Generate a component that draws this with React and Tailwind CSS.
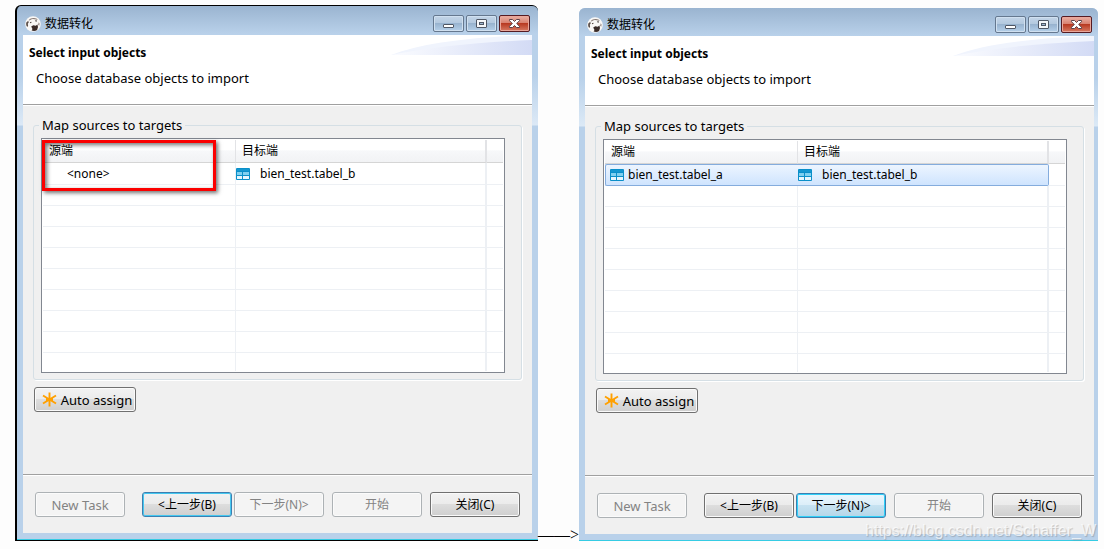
import React from "react";

function AppIcon() {
  return (
    <svg width="16" height="16" viewBox="0 0 16 16" className="shrink-0" aria-hidden="true">
      <circle cx="8" cy="8" r="7.8" fill="#f9f7f5" />
      <path d="M3.600 4.200C5 2.500 7 1.800 9 2c1 .2 1.500.5 2.300.6l1.500.9-.8.3c-1-.6-2-.7-3-.5-1.200-.4-2.300-.2-3.300.4-.7.300-1.100.6-1.600.9z" fill="#8a7d78" />
      <path d="M1.300 6.400l1.700-1.300.9.900-1.100 1.800.3 1.900-.8 1.400C1.200 9.700.9 8 1.300 6.400z" fill="#5a4d48" />
      <path d="M4.900 6.300l1.400-.5.2.9-1.300.5z" fill="#4a3c38" />
      <path d="M10 4.400l1.600-.2.3 1.200-1.300.2z" fill="#2e2421" />
      <path d="M6.200 10.600l2.100-1.400 2.500.6 1.600-1.300.6 2.600-.9 3C10.400 15.300 8.400 15.300 6.600 14.600l.9-1.700z" fill="#3a2b28" />
      <path d="M13.800 6.200l.7 1.500-.4 2.200-.7-1.600z" fill="#7b6d68" />
    </svg>
  );
}

function TableIcon() {
  return (
    <svg width="14" height="12" viewBox="0 0 14 12" className="shrink-0" aria-hidden="true">
      <rect x="0" y="0" width="14" height="12" rx="1" fill="#0a8fc9" />
      <rect x="1" y="1" width="12" height="2" fill="#1397d0" />
      <rect x="1" y="4" width="5" height="3" fill="#7fd0f0" />
      <rect x="7" y="4" width="6" height="3" fill="#7fd0f0" />
      <rect x="1" y="8" width="5" height="3" fill="#e6f6fd" />
      <rect x="7" y="8" width="6" height="3" fill="#e6f6fd" />
    </svg>
  );
}

function StarIcon() {
  return (
    <svg width="15" height="15" viewBox="0 0 15 15" className="shrink-0" aria-hidden="true">
      <path d="M7.500 .5v14M1 3.500l13 8M14 3.500l-13 8M4 7.500h7" stroke="#ffa000" strokeWidth="1.900" fill="none" />
    </svg>
  );
}

function CaptionButton({ kind }) {
  const close = kind === "close";
  const look = close
    ? "border-[#551b22] bg-[linear-gradient(#eab0a4_0%,#d98271_45%,#b83a22_50%,#d77a63_100%)] shadow-[inset_0_0_0_1px_#e9a79b]"
    : "border-[#65788f] bg-[linear-gradient(#c3d5e8_0%,#b4c9df_45%,#98b3cf_50%,#b5d0ea_100%)] shadow-[inset_0_0_0_1px_#d0e0f0]";
  const label = { min: "Minimize", max: "Maximize", close: "Close" }[kind];
  return (
    <button type="button" aria-label={label} className={"flex h-[17px] w-[31px] items-center justify-center rounded-xs border " + look}>
      <svg width="13" height="11" viewBox="0 0 13 11" aria-hidden="true">
        {kind === "min" && <rect x="1.500" y="6.500" width="10" height="3" rx=".5" fill="#fff" stroke="#4f5765" />}
        {kind === "max" && (
          <g stroke="#4f5765">
            <rect x="1.500" y="1.500" width="10" height="8" rx=".5" fill="#f5f7fa" />
            <rect x="4.500" y="4.500" width="4" height="2" fill="#9fb8d2" />
          </g>
        )}
        {close && (
          <path d="M1.500 1.500h3l2 2 2-2h3v1.200L8.700 5.500l2.800 2.800v1.200h-3l-2-2-2 2h-3V8.300l2.800-2.800-2.800-2.800z" fill="#fff" stroke="#5b4148" />
        )}
      </svg>
    </button>
  );
}

function PushButton({ children, state = "normal", className = "" }) {
  const looks = {
    normal: "border-[#707070] text-black bg-[linear-gradient(#f2f2f2_0%,#ebebeb_49%,#dddddd_50%,#cfcfcf_100%)] shadow-[inset_0_0_0_1px_#fafafa]",
    focus: "border-[#3c7fb1] text-black bg-[linear-gradient(#f2f2f2_0%,#ebebeb_49%,#dddddd_50%,#cfcfcf_100%)] shadow-[inset_0_0_0_1px_#45c8f0]",
    hot: "border-[#3c7fb1] text-black bg-[linear-gradient(#eaf6fd_0%,#dceef8_49%,#c6e2f1_50%,#b4d6e8_100%)] shadow-[inset_0_0_0_1px_#30d0f8]",
    disabled: "border-[#adb2b5] text-[#838383] bg-[#f4f4f4] shadow-[inset_0_0_0_1px_#fbfbfb]",
  };
  return (
    <button type="button" disabled={state === "disabled"} className={"flex h-[25px] items-center justify-center rounded-[3px] border whitespace-nowrap " + looks[state] + " " + className}>
      {children}
    </button>
  );
}

function MappingTable({ source, selected, marked }) {
  const sel = selected ? "border-y border-[#84acdd] bg-[linear-gradient(#edf5ff,#cfe4fe)] " : "border-b border-b-[#edf0f4] ";
  return (
    <div className="relative border border-[#828790] bg-white p-px">
      <table className="w-full table-fixed border-separate border-spacing-0 text-left text-xs">
        <colgroup>
          <col className="w-[193px]" />
          <col className="w-[251px]" />
          <col />
        </colgroup>
        <thead>
          <tr className="h-[23px] bg-[linear-gradient(#fff_0%,#fff_45%,#f7f8fa_46%,#f1f2f4_100%)]">
            <th className="border-r border-b border-r-[#e2e3e6] border-b-[#d5d5d5] p-0 pl-1.5 font-normal">源端</th>
            <th className="border-r-2 border-b border-r-[#e2e3e6] border-b-[#d5d5d5] p-0 pl-1.5 font-normal">目标端</th>
            <th className="border-b border-b-[#d5d5d5] p-0" aria-label="Empty" />
          </tr>
        </thead>
        <tbody>
          <tr className="h-[22px]">
            <td className={"p-0 " + sel + (selected ? "rounded-l-xs border-l" : "border-r border-r-[#edf0f4]")}>
              {selected ? (
                <div className="flex items-center gap-1 pl-1">
                  <TableIcon />
                  {source}
                </div>
              ) : (
                <div className="pl-6">{source}</div>
              )}
            </td>
            <td className={"p-0 " + sel + (selected ? "rounded-r-xs border-r" : "border-r-2 border-r-[#edf0f4]")}>
              <div className="flex items-center gap-2.5">
                <TableIcon />
                bien_test.tabel_b
              </div>
            </td>
            <td className="border-b border-[#edf0f4] p-0" />
          </tr>
          {[1, 2, 3, 4, 5, 6, 7, 8].map((n) => (
            <tr key={n} className="h-[21px]">
              <td className="border-r border-b border-[#edf0f4] p-0" />
              <td className="border-r-2 border-b border-[#edf0f4] p-0" />
              <td className="border-b border-[#edf0f4] p-0" />
            </tr>
          ))}
          <tr className="h-[18px]">
            <td className="border-r border-[#edf0f4] p-0" />
            <td className="border-r-2 border-[#edf0f4] p-0" />
            <td className="p-0" />
          </tr>
        </tbody>
      </table>
      {marked && (
        <div className="pointer-events-none absolute top-px left-0 h-[51px] w-[174px] border-3 border-[#fb0000] shadow-[2px_2px_4px_rgba(0,0,0,0.55),inset_2px_2px_4px_rgba(0,0,0,0.55)]" />
      )}
    </div>
  );
}

function Banner() {
  return (
    <header className="relative h-[70px] border-b border-[#a0a0a0] bg-white">
      <svg width="141" height="20" viewBox="0 0 141 20" className="absolute top-0 right-0" aria-hidden="true">
        <defs>
          <linearGradient id="wave" x1="0" x2="1">
            <stop offset="0" stopColor="#fbfcff" />
            <stop offset="1" stopColor="#d3dbf5" />
          </linearGradient>
        </defs>
        <path d="M0 20C30 8 80 2 141 0V20z" fill="#f0f4fd" />
        <path d="M0 20C40 12 90 7 141 5V20z" fill="url(#wave)" />
      </svg>
      <h1 className="relative px-1.5 pt-2.5 text-xs leading-4 font-bold">Select input objects</h1>
      <p className="relative px-[13px] pt-[9px] leading-4">Choose database objects to import</p>
    </header>
  );
}

function Wizard({ source, selected, marked, frame, back, next }) {
  return (
    <section className={"min-w-0 bg-[#b9d1ea] " + frame}>
      <div className="flex items-center gap-1 pr-0.5 pb-[3px] pl-0.5">
        <AppIcon />
        <h2 className="grow text-xs leading-4">数据转化</h2>
        <div className="flex gap-0.5">
          <CaptionButton kind="min" />
          <CaptionButton kind="max" />
          <CaptionButton kind="close" />
        </div>
      </div>
      <Banner />
      <main className="border-t border-white bg-[#f0f0f0]">
        <div className="px-2.5 pt-[11px] pb-[62px]">
          <fieldset className="min-w-0 rounded-[3px] border border-[#d5dfe5] pt-[5px] pr-4 pb-1.5 pl-[7px] shadow-[1px_1px_0_#fff]">
            <legend className="-ml-0.5 px-[3px] leading-4">Map sources to targets</legend>
            <MappingTable source={source} selected={selected} marked={marked} />
          </fieldset>
          <PushButton className="mt-[7px] ml-px w-[102px] gap-1 pl-1">
            <StarIcon />
            Auto assign
          </PushButton>
        </div>
        <footer className="border-t border-[#a0a0a0]">
          <div className="flex border-t border-white px-3 pt-4 pb-4">
            <PushButton state="disabled" className="w-[90px]">New Task</PushButton>
            <PushButton state={back} className="ml-auto w-[90px] text-xs">&lt;上一步(B)</PushButton>
            <PushButton state={next} className="ml-0.5 w-[90px] text-xs">下一步(N)&gt;</PushButton>
            <PushButton state="disabled" className="ml-2 w-[90px] text-xs">开始</PushButton>
            <PushButton className="ml-2 w-[90px] text-xs">关闭(C)</PushButton>
          </div>
        </footer>
      </main>
    </section>
  );
}

export default function App() {
  return (
    <div className="relative grid min-h-screen grid-cols-[523fr_41px_519fr] items-start bg-[#fdfdfd] pt-[5px] pr-1.5 pl-[15px] font-['Noto_Sans','Noto_Sans_CJK_SC',sans-serif] text-[13px] leading-4 text-black">
      <Wizard
        source="<none>"
        marked
        back="focus"
        next="disabled"
        frame="rounded-t-md border-t border-b border-l-2 border-black bg-[linear-gradient(#9ab4d0,#b9d1ea_28px,#b9d1ea_70px,#dce9f6_119px,#b9d1ea_120px)] pt-[9px] pr-1.5 pb-[7px] pl-1.5 shadow-[inset_0_-1px_0_#35cbe3]"
      />
      <div className="self-end pb-1 font-['Liberation_Serif',serif] text-base leading-5 whitespace-nowrap">——&gt;</div>
      <Wizard
        source="bien_test.tabel_a"
        selected
        back="normal"
        next="hot"
        frame="mt-[3px] rounded-t-md border-b border-[#35cbe3] bg-[linear-gradient(#9ab4d0,#b9d1ea_28px,#b9d1ea_70px,#dce9f6_118px,#b9d1ea_119px)] pt-2 pr-1 pb-1.5 pl-1.5"
      />
      <div className="pointer-events-none absolute right-2 bottom-2 font-['Liberation_Sans',sans-serif] text-base leading-5 text-white/70 [text-shadow:1px_1px_1px_rgba(120,120,120,0.4)]">
        https://blog.csdn.net/Schaffer_W
      </div>
    </div>
  );
}
